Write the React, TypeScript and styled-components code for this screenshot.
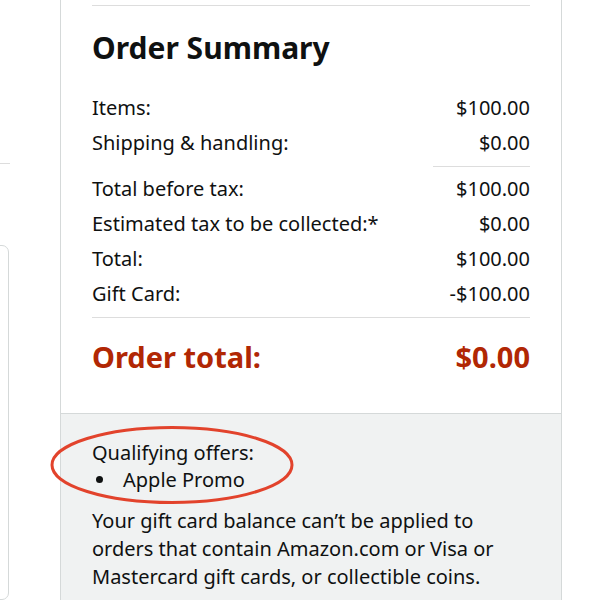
import styled, { createGlobalStyle } from "styled-components";

const GlobalStyle = createGlobalStyle`
  html, body {
    margin: 0;
    padding: 0;
    background: #fff;
    overflow: hidden;
  }
  body {
    font-family: "Noto Sans", "Open Sans", Arial, sans-serif;
    color: #0f1111;
  }
`;

const rows = [
  { label: "Items:", value: "$100.00" },
  { label: "Shipping & handling:", value: "$0.00" },
];

const totals = [
  { label: "Total before tax:", value: "$100.00" },
  { label: "Estimated tax to be collected:*", value: "$0.00" },
  { label: "Total:", value: "$100.00" },
  { label: "Gift Card:", value: "-$100.00" },
];

export default function App() {
  return (
    <>
      <GlobalStyle />
      <Page>
        <Side>
          <SideRule />
          <SideBox />
        </Side>
        <Card>
          <Summary>
            <Rule />
            <Title>Order Summary</Title>
            {rows.map((r) => (
              <Row key={r.label}>
                <span>{r.label}</span>
                <span>{r.value}</span>
              </Row>
            ))}
            <ShortRule />
            {totals.map((r) => (
              <Row key={r.label}>
                <span>{r.label}</span>
                <span>{r.value}</span>
              </Row>
            ))}
            <Rule $gap={6} />
            <GrandTotal>
              <span>Order total:</span>
              <span>$0.00</span>
            </GrandTotal>
          </Summary>
          <Offers>
            <Circle viewBox="0 0 244 80" aria-hidden>
              <ellipse
                cx="122"
                cy="40"
                rx="120"
                ry="37.5"
                fill="none"
                stroke="#e2432c"
                strokeWidth="3"
              />
            </Circle>
            <OfferTitle>Qualifying offers:</OfferTitle>
            <OfferList>
              <Offer>Apple Promo</Offer>
            </OfferList>
            <Note>
              Your gift card balance can’t be applied to orders that contain
              Amazon.com or Visa or Mastercard gift cards, or collectible coins.
            </Note>
          </Offers>
        </Card>
      </Page>
    </>
  );
}

const Page = styled.div`
  display: flex;
  height: 600px;
  width: 600px;
  overflow: hidden;
`;

const Side = styled.div`
  width: 60px;
  flex-shrink: 0;
  display: flex;
  flex-direction: column;
`;

const SideRule = styled.div`
  margin-top: 163px;
  width: 10px;
  height: 1px;
  background: #ddd;
`;

const SideBox = styled.div`
  margin-top: 81px;
  margin-left: -20px;
  width: 27px;
  height: 400px;
  border: 1px solid #d5d9d9;
  border-radius: 7px;
`;

const Card = styled.div`
  width: 500px;
  flex-shrink: 0;
  border-left: 1px solid #d5d9d9;
  border-right: 1px solid #d5d9d9;
  display: flex;
  flex-direction: column;
`;

const Summary = styled.div`
  padding: 5px 31px 0;
  height: 413px;
  box-sizing: border-box;
  display: flex;
  flex-direction: column;
  flex-shrink: 0;
`;

const Rule = styled.div<{ $gap?: number }>`
  height: 1px;
  flex-shrink: 0;
  margin-top: ${({ $gap }) => $gap ?? 0}px;
  background: #ddd;
`;

const ShortRule = styled.div`
  height: 1px;
  flex-shrink: 0;
  width: 97px;
  margin: 6px 0 4px auto;
  background: #ddd;
`;

const Title = styled.h1`
  margin: 22px 0 22px;
  font-size: 30px;
  line-height: 40px;
  font-weight: 700;
  color: #0f1111;
`;

const Row = styled.div`
  display: flex;
  justify-content: space-between;
  font-size: 20px;
  line-height: 35px;
  color: #0f1111;
`;

const GrandTotal = styled.div`
  display: flex;
  justify-content: space-between;
  margin-top: 19px;
  font-size: 29px;
  line-height: 40px;
  font-weight: 700;
  color: #b12704;
`;

const Offers = styled.div`
  position: relative;
  flex: 1;
  border-top: 1px solid #d5d9d9;
  background: #f0f2f2;
  padding: 25px 31px 0;
  font-size: 20px;
  line-height: 28px;
  color: #0f1111;
`;

const Circle = styled.svg`
  position: absolute;
  left: -11px;
  top: 11px;
  width: 244px;
  height: 80px;
  pointer-events: none;
`;

const OfferTitle = styled.div`
  line-height: 27px;
`;

const OfferList = styled.ul`
  margin: 0 0 14px;
  padding: 0;
  list-style: none;
  line-height: 27px;
`;

const Offer = styled.li`
  display: flex;
  align-items: center;

  &::before {
    content: "";
    width: 7px;
    height: 7px;
    margin: 0 20px 0 4px;
    border-radius: 50%;
    background: #0f1111;
  }
`;

const Note = styled.p`
  margin: 0;
`;
